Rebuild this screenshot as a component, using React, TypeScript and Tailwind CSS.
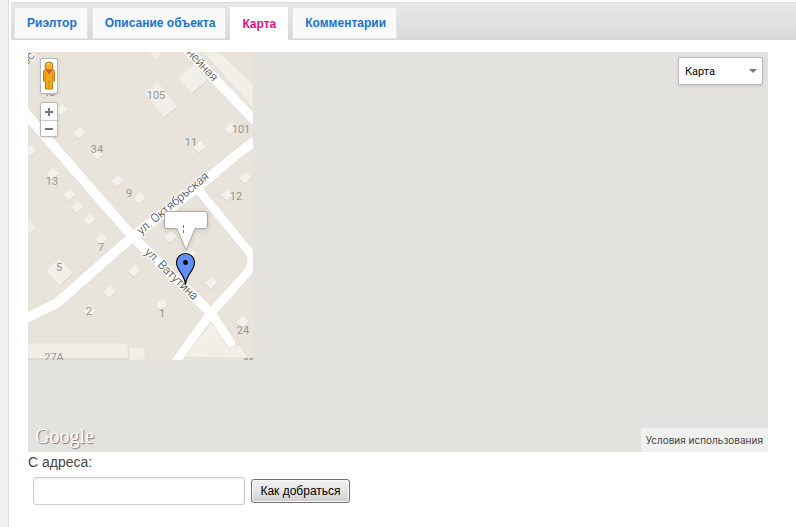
import { useState } from "react";

const tabs = ["Риэлтор", "Описание объекта", "Карта", "Комментарии"];

const roads = [
  { d: "M22 109 L58 151 L132 236 L211 313", w: 10 },
  { d: "M211 313 L231 343", w: 9 },
  { d: "M20 321 L57 303 L132 237 L197 188 L236 155 L260 137", w: 10 },
  { d: "M197 188 L250 253 Q255 263 247 273 L211 313 L174 364", w: 9 },
  { d: "M181 43 L215 79 L262 128", w: 10 },
];

// small square houses, by centre
const houses = [
  [44, 92], [61, 110], [79, 133], [97, 154], [52, 174], [69, 195], [77, 207],
  [89, 220], [101, 239], [117, 181], [139, 198], [30, 151], [199, 147],
  [230, 129], [245, 178], [227, 195], [170, 237], [211, 283], [134, 271],
  [109, 292], [89, 311], [161, 305], [242, 322], [190, 254],
];

const labels = [
  { x: 156, y: 99, t: "105" },
  { x: 241, y: 133, t: "101" },
  { x: 191, y: 146, t: "11" },
  { x: 97, y: 153, t: "34" },
  { x: 52, y: 185, t: "13" },
  { x: 129, y: 197, t: "9" },
  { x: 236, y: 200, t: "12" },
  { x: 101, y: 251, t: "7" },
  { x: 59, y: 271, t: "5" },
  { x: 89, y: 315, t: "2" },
  { x: 162, y: 317, t: "1" },
  { x: 243, y: 334, t: "24" },
  { x: 54, y: 361, t: "27А" },
  { x: 49, y: 96, t: "40" },
];

function MapTile() {
  return (
    <svg viewBox="28 52 225 308" width="225" height="308" className="block">
      <rect x="28" y="52" width="225" height="308" fill="#e8e4dc" />
      <g fill="#f2efe9" stroke="#e2ddd5" strokeWidth="0.6">
        <path d="M203 52 L219 52 L253 84 L253 108 Z" />
        <path d="M178 78 L194 64 L208 80 L192 94 Z" />
        <path d="M144 92 L158 82 L178 107 L164 118 Z" />
        <path d="M148 52 L164 52 L155 59 Z" />
        <path d="M46 271 L59 258 L73 273 L60 286 Z" />
        <path d="M28 218 L36 227 L28 235 Z" />
        <path d="M28 343 L128 343 L128 359 L28 359 Z" />
        <path d="M129 347 L145 347 L145 360 L129 360 Z" />
        <path d="M185 357 L212 322 L226 345 Q232 351 238 344 L248 358 Z" />
      </g>
      {houses.map(([x, y]) => (
        <g key={`${x}-${y}`}>
          <path d={`M${x - 6} ${y + 1} L${x + 1} ${y - 6} L${x + 7} ${y} L${x} ${y + 6} Z`} fill="#f4f1ec" />
          <path d={`M${x + 7} ${y} L${x} ${y + 6} L${x - 6} ${y + 1}`} stroke="#dad6ce" fill="none" />
        </g>
      ))}
      <path d="M28 359 H128 M60 286 L73 273 M164 118 L178 107 M192 94 L208 80" stroke="#cfcfd4" fill="none" />
      <g fill="none" stroke="#dcd7ce" strokeLinecap="round" strokeLinejoin="round">
        {roads.map((r) => (
          <path key={r.d} d={r.d} strokeWidth={r.w + 1} />
        ))}
      </g>
      <g fill="none" stroke="#fff" strokeLinecap="round" strokeLinejoin="round">
        {roads.map((r) => (
          <path key={r.d} d={r.d} strokeWidth={r.w} />
        ))}
      </g>
      <g className="font-['Roboto',sans-serif] text-[11px]" fill="#989692" textAnchor="middle">
        {labels.map((l) => (
          <text key={l.t} x={l.x} y={l.y}>{l.t}</text>
        ))}
      </g>
      <g
        className="font-['Roboto',sans-serif] text-[12px] font-light"
        fill="#333"
        stroke="#fff"
        strokeWidth="2"
        paintOrder="stroke"
      >
        <text transform="translate(141 235) rotate(-40)">ул. Октябрьская</text>
        <text transform="translate(144 253) rotate(44)">ул. Ватутина</text>
        <text transform="translate(213 82) rotate(47)" textAnchor="end">Линейная</text>
        <text transform="translate(31 61) rotate(-50)" textAnchor="middle">ос</text>
      </g>
      <path d="M244 359 H253" stroke="#777" strokeDasharray="4 1" />
    </svg>
  );
}

function Marker() {
  return (
    <svg viewBox="160 206 54 82" width="54" height="82" className="block">
      <path
        d="M167 211.500 H205 Q207.500 211.500 207.500 214 V226 Q207.500 228.500 205 228.500 H195 L186 250 L177 228.500 H167 Q164.500 228.500 164.500 226 V214 Q164.500 211.500 167 211.500 Z"
        fill="#fff"
        stroke="#aaa"
        className="drop-shadow-sm"
      />
      <path d="M183.500 225 V234" stroke="#777" strokeDasharray="3 2" />
      <path
        d="M185.500 285 C185 274 176.500 271 176.500 262.500 A9 9 0 0 1 194.500 262.500 C194.500 271 186 274 185.500 285 Z"
        fill="#648ff5"
        stroke="#111"
        strokeWidth="1.200"
      />
      <circle cx="185.500" cy="262.500" r="2.400" fill="#000" />
    </svg>
  );
}

function Pegman() {
  return (
    <svg viewBox="0 0 16 34" width="16" height="34">
      <path
        d="M2.500 13 Q2.500 10.500 5 10.500 H11 Q13.500 10.500 13.500 13 V22 H11.500 V30 H4.500 V22 H2.500 Z"
        fill="#f2ab1a"
        stroke="#b87a13"
      />
      <path d="M8 21 V30 M4.500 14 V21 M11.500 14 V21" stroke="#c98b16" />
      <path d="M4 10.500 H12 L8 15.500 Z" fill="#e8583c" />
      <circle cx="8" cy="7" r="4" fill="#f4b028" stroke="#b87a13" />
      <path d="M5.500 5.500 Q8 3 10.500 5.500" stroke="#fbd984" fill="none" />
    </svg>
  );
}

export default function App() {
  const [active, setActive] = useState(2);
  const [address, setAddress] = useState("");

  return (
    <div className="flex min-h-screen bg-[#f0f0f0] font-['Liberation_Sans',Arial,sans-serif]">
      <main className="ml-2 flex-1 border-l border-[#dcdcdc] bg-white pt-0.5 pl-0.5">
        <nav className="flex h-[38px] gap-1 border-t border-[#dcdcdc] bg-linear-to-b from-[#e8e8e8] to-[#d9d9d9] pt-1 pl-[3px]">
          {tabs.map((tab, i) => (
            <button
              key={tab}
              type="button"
              onClick={() => setActive(i)}
              className={
                i === active
                  ? "h-full bg-white pr-3 pl-3 text-[12px] font-bold text-[#e5118a]"
                  : "h-8 border border-[#e4e4e4] bg-[#f9f9f9] pr-2.5 pl-3 text-[12px] font-bold text-[#1874d2]"
              }
            >
              {tab}
            </button>
          ))}
        </nav>

        <div className="pt-3 pr-7 pl-[17px]">
          <section className="relative h-[400px] overflow-hidden bg-[#e4e2de]">
            <MapTile />

            <div className="absolute top-[154px] left-[132px]">
              <Marker />
            </div>

            <div className="absolute top-1.5 left-3 flex w-[18px] flex-col gap-2">
              <button
                type="button"
                aria-label="Просмотр улиц"
                className="h-9 rounded-xs border border-[#b9b9b9] bg-white shadow-sm"
              >
                <Pegman />
              </button>
              <div className="flex flex-col rounded-xs border border-[#b9b9b9] bg-white shadow-sm">
                <button type="button" aria-label="Увеличить" className="flex h-[17px] items-center justify-center">
                  <svg viewBox="0 0 8 8" width="8" height="8">
                    <path d="M0 4 H8 M4 0 V8" stroke="#777" strokeWidth="2" />
                  </svg>
                </button>
                <button
                  type="button"
                  aria-label="Уменьшить"
                  className="flex h-4 items-center justify-center border-t border-[#ccc]"
                >
                  <svg viewBox="0 0 8 8" width="8" height="8">
                    <path d="M0 4 H8" stroke="#777" strokeWidth="2" />
                  </svg>
                </button>
              </div>
            </div>

            <div className="absolute top-[5px] right-[5px]">
              <select
                aria-label="Тип карты"
                className="block h-7 w-[85px] appearance-none rounded-xs border border-[#b9b9b9] bg-white pt-0.5 pl-1.5 font-['Roboto',sans-serif] text-[11px] text-black shadow-sm"
              >
                <option>Карта</option>
                <option>Спутник</option>
              </select>
              <svg viewBox="0 0 8 4" width="8" height="4" className="pointer-events-none absolute top-3 right-1.5">
                <path d="M0 0 H8 L4 4 Z" fill="#777" />
              </svg>
            </div>

            <div className="absolute bottom-1 left-[7px] font-['Liberation_Serif',serif] text-[20px] leading-6 text-white [text-shadow:1px_1px_1px_#777]">
              Google
            </div>
            <a
              href="#terms"
              className="absolute right-0 bottom-0 bg-[#f0f0ee] px-[5px] font-['Inter','Liberation_Sans',sans-serif] text-[10px] leading-6 text-[#444]"
            >
              Условия использования
            </a>
          </section>

          <form onSubmit={(e) => e.preventDefault()}>
            <label htmlFor="from" className="block text-[14px] leading-5 text-[#444]">
              С адреса:
            </label>
            <div className="flex items-center gap-1.5 pt-[5px] pl-[5px]">
              <input
                id="from"
                type="text"
                value={address}
                onChange={(e) => setAddress(e.target.value)}
                className="h-7 w-[212px] rounded-[3px] border border-[#ccc] bg-white px-2 text-[13px] shadow-[inset_0_1px_3px_#eee]"
              />
              <button
                type="submit"
                className="h-6 min-w-[99px] rounded-[3px] border border-[#707070] bg-linear-to-b from-[#f2f2f2] via-[#e4e4e4] to-[#cfcfcf] px-[7px] text-[12px] text-black shadow-[inset_0_0_0_1px_#fafafa]"
              >
                Как добраться
              </button>
            </div>
          </form>
        </div>
      </main>
    </div>
  );
}
